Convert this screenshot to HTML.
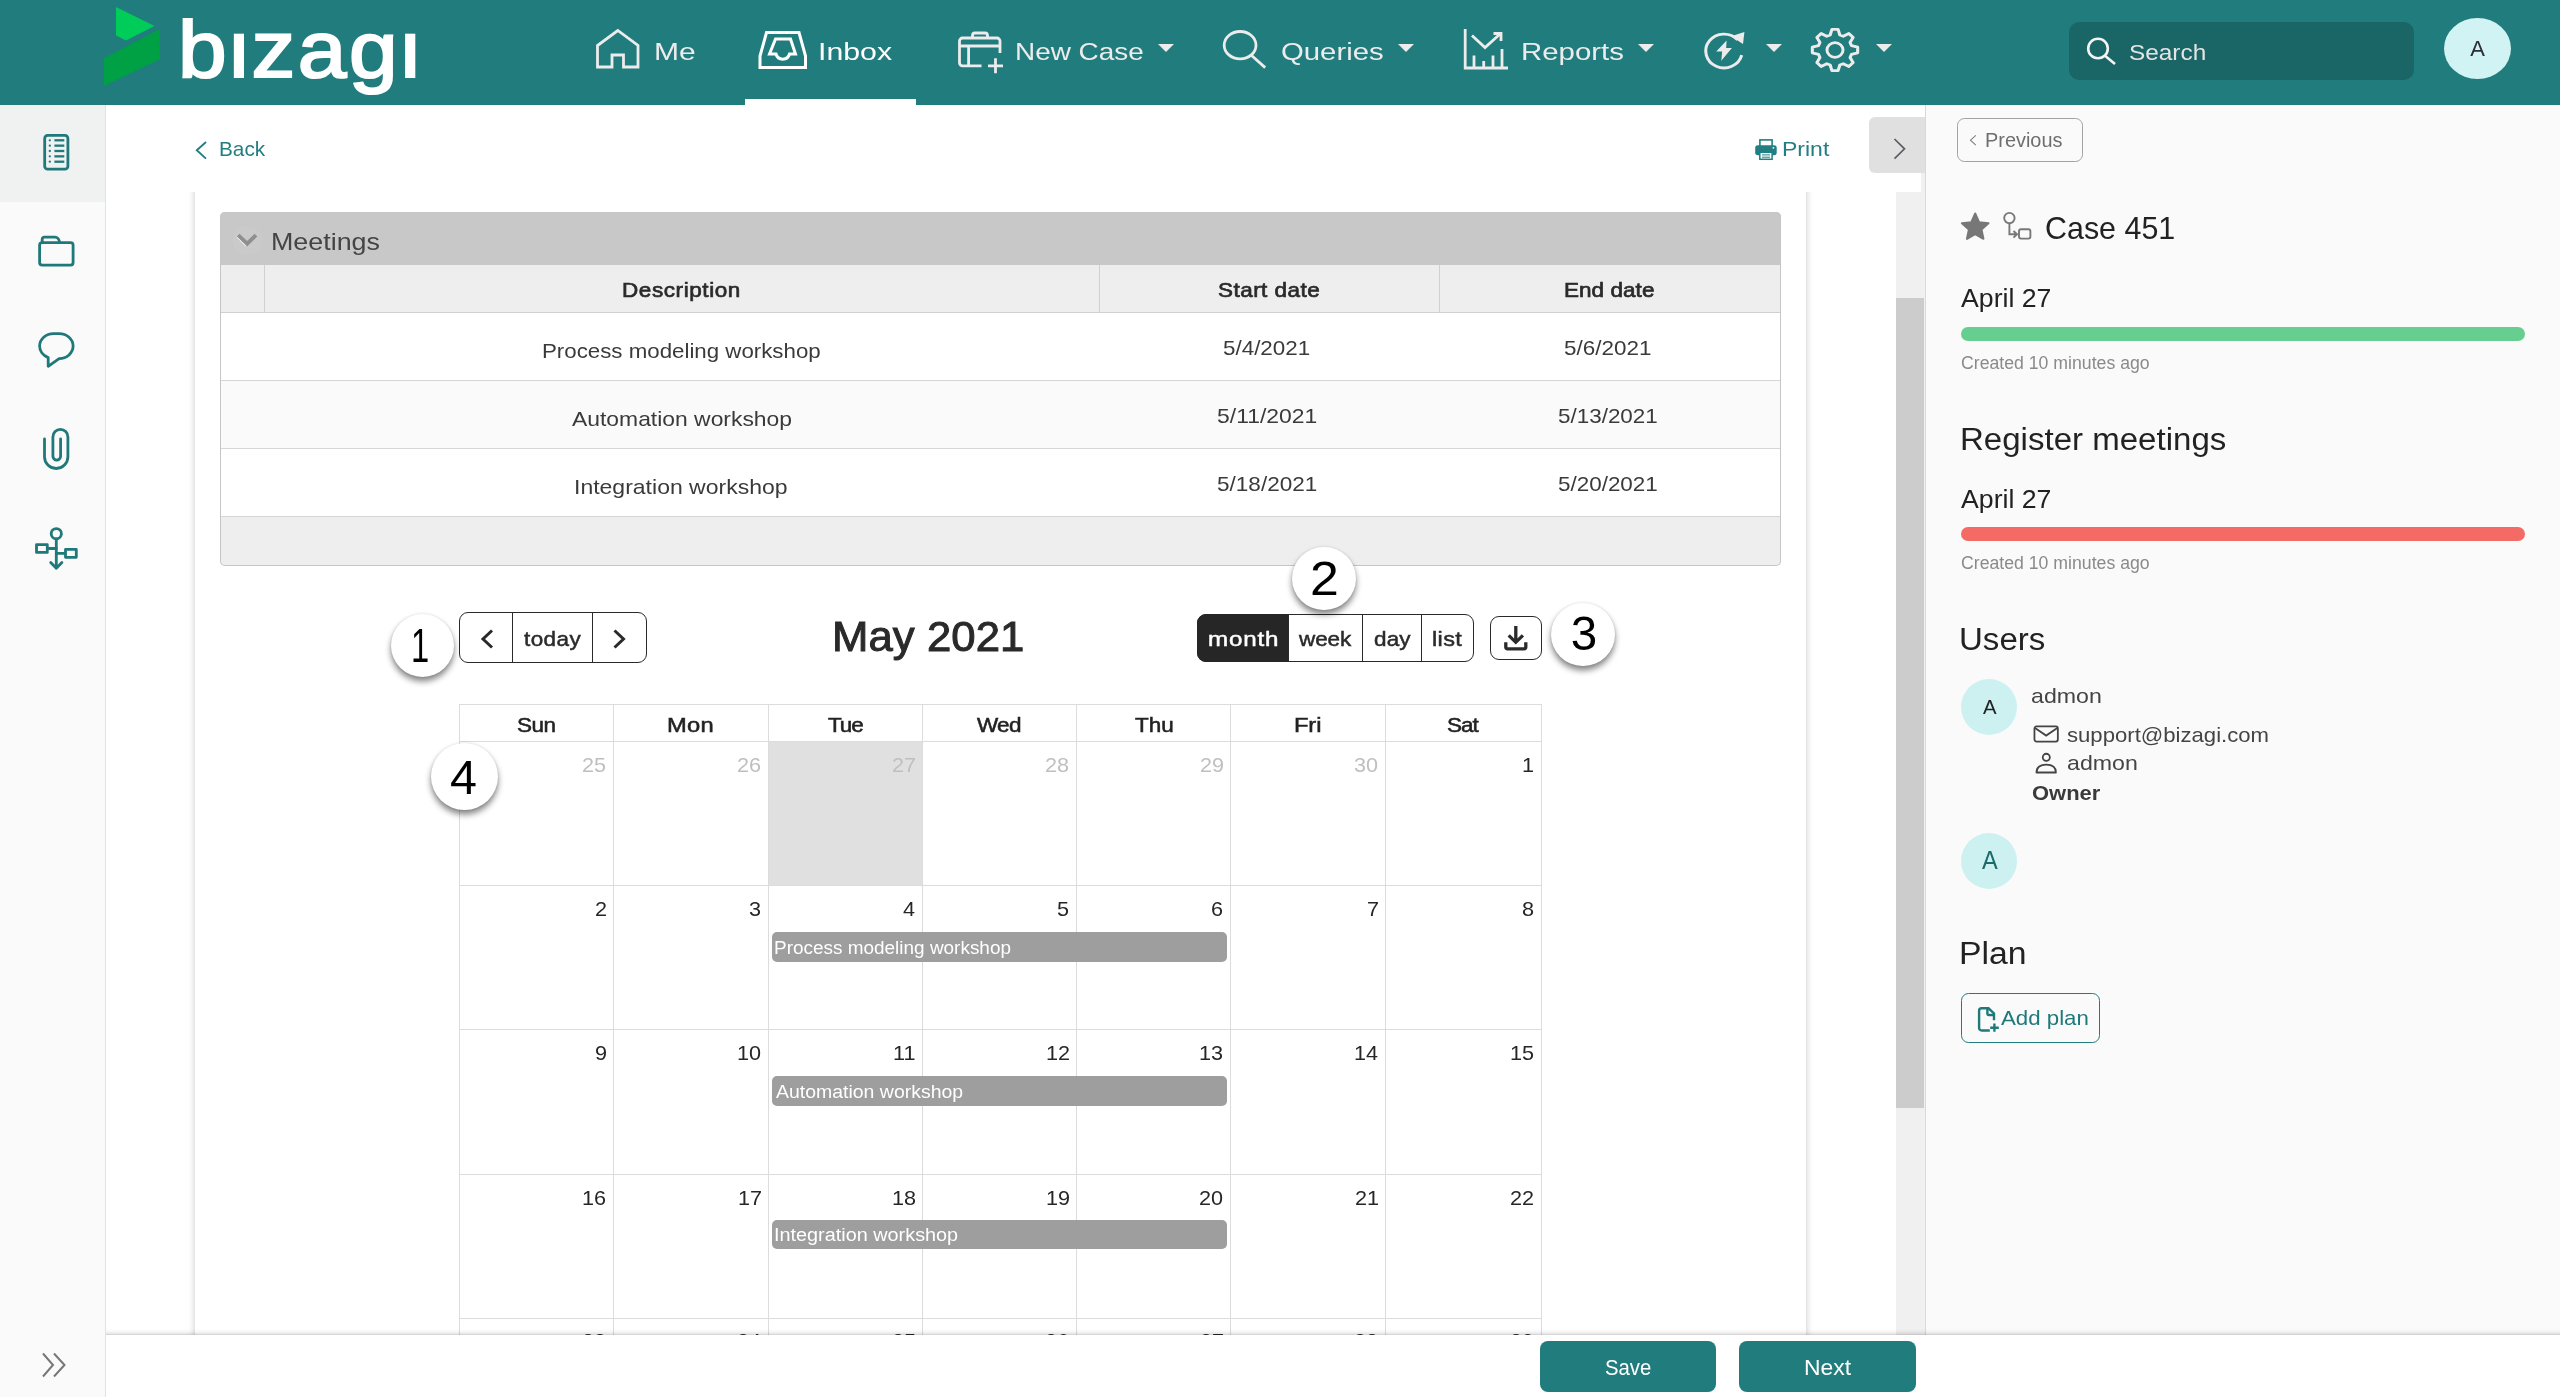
<!DOCTYPE html>
<html lang="en"><head><meta charset="utf-8"><title>Bizagi - Inbox</title>
<style>
*{margin:0;padding:0;box-sizing:border-box}
html,body{width:2560px;height:1397px;overflow:hidden;background:#fff}
body{position:relative;font-family:"Liberation Sans",sans-serif;}
.t{position:absolute;white-space:nowrap;display:block;transform-origin:0 0}
.a{position:absolute;display:block}
svg{position:absolute;overflow:visible}
header,nav,main,aside,footer{display:block;position:static}
#root{position:absolute;left:0;top:0;width:2560px;height:1397px;overflow:hidden;will-change:transform}
</style></head>
<body>
<div id="root">
<header>
<div class="a" style="left:0px;top:0px;width:2560px;height:105px;background:#217c7d"></div>
<svg style="left:100px;top:0px" width="70" height="100" viewBox="0 0 70 100" ><polygon points="16,7 54.5,26 26,40.6 16,35.5" fill="#00cc5a"/><polygon points="59.8,29 59.8,59.2 4,86 4,58.3" fill="#00a045"/></svg>
<span class="t" style="left:177.72px;top:5px;font-size:79.5px;line-height:89px;color:#fff;transform:scaleX(1.1000);letter-spacing:2.423px;-webkit-text-stroke:2.2px #fff;">bizagi</span>
<div class="a" style="left:230px;top:11px;width:18px;height:19.5px;background:#217c7d"></div>
<div class="a" style="left:401px;top:11px;width:18px;height:19.5px;background:#217c7d"></div>
<svg style="left:590px;top:20px" width="60" height="60" viewBox="0 0 60 60" ><path d="M7.5 47 V25.5 L27.8 10.5 L48 25.5 V47 H33.5 V35 H22 V47 Z" fill="none" stroke="#ececec" stroke-width="2.8" stroke-linejoin="miter"/></svg>
<span class="t" style="left:654.10px;top:38px;font-size:24.8px;line-height:27px;color:#ececec;transform:scaleX(1.2113);">Me</span>
<svg style="left:750px;top:20px" width="70" height="60" viewBox="0 0 70 60" ><path d="M16.5 12.5 H49 L55.5 36 V47.5 H10 V36 Z" fill="none" stroke="#fff" stroke-width="3" stroke-linejoin="miter"/><path d="M25.5 19 H40.5 L45.5 34 H39.5 A7 7 0 0 1 26 34 H19.5 Z" fill="none" stroke="#fff" stroke-width="3" stroke-linejoin="miter"/></svg>
<span class="t" style="left:818.28px;top:38px;font-size:24.8px;line-height:27px;color:#fff;transform:scaleX(1.2209);">Inbox</span>
<div class="a" style="left:745px;top:99px;width:171px;height:6px;background:#fff"></div>
<svg style="left:950px;top:25px" width="60" height="55" viewBox="0 0 60 55" ><path d="M31.5 40.8 H12.5 A3 3 0 0 1 9.5 37.8 V16 A3 3 0 0 1 12.5 13 H47 A3 3 0 0 1 50 16 V28" fill="none" stroke="#ececec" stroke-width="2.8" stroke-linejoin="miter"/><path d="M22.5 12.5 V10.5 A2.5 2.5 0 0 1 25 8 H35 A2.5 2.5 0 0 1 37.500 10.5 V12.5" fill="none" stroke="#ececec" stroke-width="2.8" stroke-linejoin="miter"/><path d="M9.5 21 H50 M18.6 21 V40.800" fill="none" stroke="#ececec" stroke-width="2.8" stroke-linejoin="miter"/><path d="M38 40.800 H53 M45.5 33.300 V48.3" fill="none" stroke="#ececec" stroke-width="2.8" stroke-linejoin="miter"/></svg>
<span class="t" style="left:1015.27px;top:38px;font-size:24.8px;line-height:27px;color:#ececec;transform:scaleX(1.1256);">New Case</span>
<svg style="left:1157.7px;top:44px" width="16" height="8" viewBox="0 0 16 8" ><polygon points="0,0 16,0 8,8" fill="#ececec"/></svg>
<svg style="left:1215px;top:22px" width="60" height="55" viewBox="0 0 60 55" ><ellipse cx="25.100" cy="23.200" rx="15.900" ry="13.700" fill="none" stroke="#ececec" stroke-width="2.8" stroke-linejoin="miter"/><path d="M36.300 33.300 L50.200 45.600" fill="none" stroke="#ececec" stroke-width="2.8" stroke-linejoin="miter"/></svg>
<span class="t" style="left:1281.18px;top:38px;font-size:24.8px;line-height:27px;color:#ececec;transform:scaleX(1.1826);">Queries</span>
<svg style="left:1398px;top:44px" width="16" height="8" viewBox="0 0 16 8" ><polygon points="0,0 16,0 8,8" fill="#ececec"/></svg>
<svg style="left:1455px;top:22px" width="60" height="55" viewBox="0 0 60 55" ><path d="M10.2 7 V46 H53" fill="none" stroke="#ececec" stroke-width="2.8" stroke-linejoin="miter"/><path d="M19 46 V33.500 M28.700 46 V39 M38 46 V33.500 M47 46 V27" fill="none" stroke="#ececec" stroke-width="2.8" stroke-linejoin="miter"/><path d="M17 13.500 L30 25.500 L44.5 12.500" fill="none" stroke="#ececec" stroke-width="2.8" stroke-linejoin="miter"/><path d="M38.500 11.500 H46 V19" fill="none" stroke="#ececec" stroke-width="2.8" stroke-linejoin="miter"/></svg>
<span class="t" style="left:1520.65px;top:38px;font-size:24.8px;line-height:27px;color:#ececec;transform:scaleX(1.1853);">Reports</span>
<svg style="left:1638.3px;top:44px" width="16" height="8" viewBox="0 0 16 8" ><polygon points="0,0 16,0 8,8" fill="#ececec"/></svg>
<svg style="left:1723.5px;top:50.5px" width="1" height="1" viewBox="0 0 1 1" ><g transform="scale(1.08,1)"><path d="M16.40 4.09 A16.900 16.900 0 1 1 12.56 -11.31" fill="none" stroke="#ececec" stroke-width="2.8" stroke-linejoin="miter"/><polygon points="18.900,-19 17.600,-7 6.500,-14.800" fill="#ececec"/><path d="M2.400 -10.500 L-7.200 0.400 H-1.700 L-2.500 9.700 L7.300 -3 H2 Z" fill="#ececec"/></g></svg>
<svg style="left:1765.7px;top:44px" width="16" height="8" viewBox="0 0 16 8" ><polygon points="0,0 16,0 8,8" fill="#ececec"/></svg>
<svg style="left:1835.4px;top:50.4px" width="1" height="1" viewBox="0 0 1 1" ><g transform="scale(1.1,1)"><path d="M-2.8 -20.6 L2.8 -20.6 L4.4 -15.0 L7.5 -13.7 L12.6 -16.5 L16.5 -12.6 L13.7 -7.5 L15.0 -4.4 L20.6 -2.8 L20.6 2.8 L15.0 4.4 L13.7 7.5 L16.5 12.6 L12.6 16.5 L7.5 13.7 L4.4 15.0 L2.8 20.6 L-2.8 20.6 L-4.4 15.0 L-7.5 13.7 L-12.6 16.5 L-16.5 12.6 L-13.7 7.5 L-15.0 4.4 L-20.6 2.8 L-20.6 -2.8 L-15.0 -4.4 L-13.7 -7.5 L-16.5 -12.6 L-12.6 -16.5 L-7.5 -13.7 L-4.4 -15.0 Z" fill="none" stroke="#ececec" stroke-width="2.800" stroke-linejoin="round"/><circle cx="0" cy="0" r="7.300" fill="none" stroke="#ececec" stroke-width="2.700"/></g></svg>
<svg style="left:1875.6px;top:44px" width="16" height="8" viewBox="0 0 16 8" ><polygon points="0,0 16,0 8,8" fill="#ececec"/></svg>
<div class="a" style="left:2069px;top:22px;width:345px;height:57.5px;background:#1a6667;border-radius:10px"></div>
<svg style="left:2080px;top:30px" width="45" height="45" viewBox="0 0 45 45" ><circle cx="18" cy="18.500" r="9.8" fill="none" stroke="#f4f4f4" stroke-width="2.6"/><path d="M25 25.800 L35 34" stroke="#f4f4f4" stroke-width="2.6" fill="none"/></svg>
<span class="t" style="left:2129.40px;top:39px;font-size:22.9px;line-height:26px;color:#e4e4e4;transform:scaleX(1.0649);">Search</span>
<div class="a" style="left:2444px;top:18px;width:67px;height:61px;background:#d2f3f3;border-radius:50%"></div>
<span class="t" style="left:2470.16px;top:36px;font-size:22px;line-height:25px;color:#2b2b3b;">A</span>
</header>
<nav>
<div class="a" style="left:0px;top:105px;width:105px;height:1292px;background:#fafafa"></div>
<div class="a" style="left:0px;top:105px;width:105px;height:97px;background:#f0f2f2"></div>
<div class="a" style="left:105px;top:105px;width:1px;height:1292px;background:#e2e2e2"></div>
<svg style="left:36px;top:125px" width="45" height="55" viewBox="0 0 45 55" ><rect x="8.700" y="10.400" width="23.200" height="33.800" rx="3" fill="none" stroke="#1f7879" stroke-width="2.8" stroke-linejoin="round" stroke-linecap="round"/><circle cx="13.800" cy="15.30" r="1.150" fill="#1f7879"/><path d="M18.400 15.30 H28.300" stroke="#1f7879" stroke-width="2.300" fill="none"/><circle cx="13.800" cy="20.65" r="1.150" fill="#1f7879"/><path d="M18.400 20.65 H28.300" stroke="#1f7879" stroke-width="2.300" fill="none"/><circle cx="13.800" cy="26.00" r="1.150" fill="#1f7879"/><path d="M18.400 26.00 H28.300" stroke="#1f7879" stroke-width="2.300" fill="none"/><circle cx="13.800" cy="31.35" r="1.150" fill="#1f7879"/><path d="M18.400 31.35 H28.300" stroke="#1f7879" stroke-width="2.300" fill="none"/><circle cx="13.800" cy="36.70" r="1.150" fill="#1f7879"/><path d="M18.400 36.70 H28.300" stroke="#1f7879" stroke-width="2.300" fill="none"/></svg>
<svg style="left:30px;top:228px" width="55" height="45" viewBox="0 0 55 45" ><path d="M12.200 14.700 V11.200 A2 2 0 0 1 14.200 9.200 H25 Q28.600 9.200 29.900 14.700" fill="none" stroke="#1f7879" stroke-width="2.8" stroke-linejoin="round" stroke-linecap="round"/><rect x="9.600" y="14.700" width="33.500" height="22.400" rx="2.500" fill="none" stroke="#1f7879" stroke-width="2.8" stroke-linejoin="round" stroke-linecap="round"/></svg>
<svg style="left:30px;top:325px" width="55" height="50" viewBox="0 0 55 50" ><path d="M18.200 32.600 A14 12.500 0 0 1 9.600 21.100 A14 12.500 0 0 1 23.600 8.600 H29.100 A14 12.500 0 0 1 43.100 21.100 A14 12.500 0 0 1 29.100 33.600 L18.200 41.300 Z" fill="none" stroke="#1f7879" stroke-width="2.8" stroke-linejoin="round" stroke-linecap="round" stroke-linejoin="miter"/></svg>
<svg style="left:35px;top:420px" width="45" height="58" viewBox="0 0 45 58" ><path d="M25.600 19 V36.300 A3.850 3.850 0 0 1 17.900 36.300 V16.900 A7.500 7.500 0 0 1 32.900 16.900 V36.800 A11.700 11.700 0 0 1 9.500 36.800 V19" fill="none" stroke="#1f7879" stroke-width="2.8" stroke-linejoin="round" stroke-linecap="round"/></svg>
<svg style="left:28px;top:520px" width="60" height="58" viewBox="0 0 60 58" ><circle cx="28.300" cy="13.700" r="5.100" fill="none" stroke="#1f7879" stroke-width="2.8" stroke-linejoin="round" stroke-linecap="round"/><path d="M28.300 18.800 V47.500 M22.700 42.500 L28.300 48.200 L33.900 42.500" fill="none" stroke="#1f7879" stroke-width="2.8" stroke-linejoin="round" stroke-linecap="round"/><rect x="8.500" y="24.700" width="10.800" height="7.700" fill="none" stroke="#1f7879" stroke-width="2.8" stroke-linejoin="round" stroke-linecap="round" stroke-linejoin="miter"/><rect x="37.500" y="29.400" width="10.800" height="7.900" fill="none" stroke="#1f7879" stroke-width="2.8" stroke-linejoin="round" stroke-linecap="round" stroke-linejoin="miter"/><path d="M20.600 28.500 H28.300 M28.300 33.300 H36.200" fill="none" stroke="#1f7879" stroke-width="2.8" stroke-linejoin="round" stroke-linecap="round"/></svg>
<svg style="left:38px;top:1348px" width="35" height="35" viewBox="0 0 35 35" ><path d="M5 5.500 L15 17 L5 28.500 M16 5.500 L26.500 17 L16 28.500" fill="none" stroke="#777" stroke-width="2"/></svg>
</nav>
<main>
<svg style="left:190px;top:135px" width="25" height="30" viewBox="0 0 25 30" ><path d="M16 7 L6.800 15.200 L16 23.600" fill="none" stroke="#217f84" stroke-width="1.900"/></svg>
<span class="t" style="left:218.84px;top:137px;font-size:21px;line-height:23px;color:#217f84;transform:scaleX(0.9879);">Back</span>
<svg style="left:1750px;top:135px" width="32" height="30" viewBox="0 0 32 30" ><rect x="9.900" y="4.900" width="12.200" height="7" fill="#fff" stroke="#217f84" stroke-width="1.600"/><rect x="5.200" y="10.200" width="21.500" height="10" rx="2.600" fill="#217f84"/><rect x="9.800" y="17.300" width="12.300" height="7" fill="#fff" stroke="#217f84" stroke-width="1.500"/><path d="M12 19.900 H20 M12 22.200 H20" stroke="#217f84" stroke-width="1"/><circle cx="23.400" cy="12.800" r="0.900" fill="#fff"/></svg>
<span class="t" style="left:1782.16px;top:137px;font-size:21px;line-height:23px;color:#217f84;transform:scaleX(1.0950);">Print</span>
<div class="a" style="left:1869px;top:117px;width:56.5px;height:56px;background:#e0e0e0;border-radius:6px 0 0 6px"></div>
<svg style="left:1885px;top:130px" width="30" height="40" viewBox="0 0 30 40" ><path d="M9.500 9 L19.500 18.800 L9.500 28.600" fill="none" stroke="#5c5c66" stroke-width="1.700"/></svg>
<div class="a" style="left:1921.3px;top:173px;width:4px;height:19px;background:#f0f0f0"></div>
<div class="a" style="left:106px;top:192px;width:1819px;height:1143.500px;overflow:hidden">
<div class="a" style="left:-106px;top:-192px;width:2560px;height:1397px">
<div class="a" style="left:195px;top:170px;width:1610.5px;height:1400px;background:#fff;box-shadow:0 0 7px rgba(0,0,0,.22)"></div>
<div class="a" style="left:1896px;top:192px;width:29px;height:1145px;background:#f0f0f0"></div>
<div class="a" style="left:1896px;top:298px;width:28px;height:810.3px;background:#cccccc"></div>
<div class="a" style="left:220px;top:212px;width:1561px;height:353.5px;background:#eee;border-radius:5px;overflow:hidden"></div>
<div class="a" style="left:220px;top:212px;width:1561px;height:52.5px;background:#c8c8c8;border-radius:5px 5px 0 0"></div>
<div class="a" style="left:232.5px;top:226px;width:29px;height:29px;background:rgba(255,255,255,.045);border-radius:50%"></div>
<svg style="left:235px;top:230px" width="25" height="20" viewBox="0 0 25 20" ><path d="M2.600 6.300 L11.600 15.300" fill="none" stroke="#fff" stroke-width="2.500"/><path d="M3.200 5.200 L12.100 13.700 L21 5.200" fill="none" stroke="#8f8f8f" stroke-width="3.900"/></svg>
<span class="t" style="left:271.15px;top:228px;font-size:24.5px;line-height:27px;color:#444;transform:scaleX(1.0957);">Meetings</span>
<div class="a" style="left:220.5px;top:264.5px;width:1560px;height:48px;background:#eeeeee"></div>
<div class="a" style="left:263.5px;top:264.5px;width:1px;height:48px;background:#d0d0d0"></div>
<div class="a" style="left:1098.5px;top:264.5px;width:1px;height:48px;background:#d0d0d0"></div>
<div class="a" style="left:1438.5px;top:264.5px;width:1px;height:48px;background:#d0d0d0"></div>
<div class="a" style="left:220.5px;top:312px;width:1560px;height:1px;background:#d0d0d0"></div>
<span class="t" style="left:622.35px;top:278px;font-size:21px;line-height:23px;color:#2a2a2a;transform:scaleX(1.0700);letter-spacing:0.552px;-webkit-text-stroke:0.7px #2a2a2a;">Description</span>
<span class="t" style="left:1218.14px;top:278px;font-size:21px;line-height:23px;color:#2a2a2a;transform:scaleX(1.0700);letter-spacing:0.438px;-webkit-text-stroke:0.7px #2a2a2a;">Start date</span>
<span class="t" style="left:1564.15px;top:278px;font-size:21px;line-height:23px;color:#2a2a2a;transform:scaleX(1.0700);letter-spacing:0.057px;-webkit-text-stroke:0.7px #2a2a2a;">End date</span>
<div class="a" style="left:220.5px;top:313px;width:1560px;height:67px;background:#fff"></div>
<div class="a" style="left:220.5px;top:380px;width:1560px;height:1px;background:#d6d6d6"></div>
<div class="a" style="left:220.5px;top:381px;width:1560px;height:67px;background:#fafafa"></div>
<div class="a" style="left:220.5px;top:448px;width:1560px;height:1px;background:#d6d6d6"></div>
<div class="a" style="left:220.5px;top:449px;width:1560px;height:67px;background:#fff"></div>
<div class="a" style="left:220.5px;top:516px;width:1560px;height:1px;background:#d6d6d6"></div>
<span class="t" style="left:541.82px;top:339px;font-size:21px;line-height:23px;color:#3a3a3a;transform:scaleX(1.0612);">Process modeling workshop</span>
<span class="t" style="left:1223.40px;top:336px;font-size:21px;line-height:23px;color:#3a3a3a;transform:scaleX(1.0663);">5/4/2021</span>
<span class="t" style="left:1564.10px;top:336px;font-size:21px;line-height:23px;color:#3a3a3a;transform:scaleX(1.0688);">5/6/2021</span>
<span class="t" style="left:571.70px;top:407px;font-size:21px;line-height:23px;color:#3a3a3a;transform:scaleX(1.0896);">Automation workshop</span>
<span class="t" style="left:1217.08px;top:404px;font-size:21px;line-height:23px;color:#3a3a3a;transform:scaleX(1.0922);">5/11/2021</span>
<span class="t" style="left:1557.80px;top:404px;font-size:21px;line-height:23px;color:#3a3a3a;transform:scaleX(1.0680);">5/13/2021</span>
<span class="t" style="left:573.93px;top:475px;font-size:21px;line-height:23px;color:#3a3a3a;transform:scaleX(1.0955);">Integration workshop</span>
<span class="t" style="left:1217.10px;top:472px;font-size:21px;line-height:23px;color:#3a3a3a;transform:scaleX(1.0735);">5/18/2021</span>
<span class="t" style="left:1557.80px;top:472px;font-size:21px;line-height:23px;color:#3a3a3a;transform:scaleX(1.0680);">5/20/2021</span>
<div class="a" style="left:220px;top:212px;width:1561px;height:353.5px;border:1px solid #c5c6c1;border-top-color:#c8c8c8;border-radius:5px;background:none"></div>
<div class="a" style="left:459px;top:612px;width:188px;height:50.5px;border:1.300px solid #2a2a2a;border-radius:9px"></div>
<div class="a" style="left:512px;top:612px;width:1.3px;height:50.5px;background:#2a2a2a"></div>
<div class="a" style="left:592px;top:612px;width:1.3px;height:50.5px;background:#2a2a2a"></div>
<svg style="left:470px;top:620px" width="35" height="35" viewBox="0 0 35 35" ><path d="M22 10.500 L13 19 L22 27.500" fill="none" stroke="#2a2a2a" stroke-width="3"/></svg>
<svg style="left:602px;top:620px" width="35" height="35" viewBox="0 0 35 35" ><path d="M12.500 10.500 L21.500 19 L12.500 27.500" fill="none" stroke="#2a2a2a" stroke-width="3"/></svg>
<span class="t" style="left:524.31px;top:627px;font-size:21px;line-height:23px;color:#2a2a2a;transform:scaleX(1.0700);letter-spacing:0.397px;-webkit-text-stroke:0.5px #2a2a2a;">today</span>
<span class="t" style="left:831.91px;top:613px;font-size:42px;line-height:47px;color:#2a2a2a;transform:scaleX(1.0400);letter-spacing:0.069px;-webkit-text-stroke:1.0px #2a2a2a;">May 2021</span>
<div class="a" style="left:1197px;top:614px;width:277px;height:48px;border:1.300px solid #2a2a2a;border-radius:9px;overflow:hidden"></div>
<div class="a" style="left:1197px;top:614px;width:91.5px;height:48px;background:#262626;border-radius:9px 0 0 9px"></div>
<div class="a" style="left:1288px;top:614px;width:1.3px;height:48px;background:#2a2a2a"></div>
<div class="a" style="left:1362px;top:614px;width:1.3px;height:48px;background:#2a2a2a"></div>
<div class="a" style="left:1421px;top:614px;width:1.3px;height:48px;background:#2a2a2a"></div>
<span class="t" style="left:1207.88px;top:627px;font-size:21px;line-height:23px;color:#fff;transform:scaleX(1.1500);letter-spacing:0.718px;-webkit-text-stroke:0.5px #fff;">month</span>
<span class="t" style="left:1299.15px;top:627px;font-size:21px;line-height:23px;color:#2a2a2a;transform:scaleX(1.0700);letter-spacing:-0.052px;-webkit-text-stroke:0.5px #2a2a2a;">week</span>
<span class="t" style="left:1373.75px;top:627px;font-size:21px;line-height:23px;color:#2a2a2a;transform:scaleX(1.0700);letter-spacing:0.151px;-webkit-text-stroke:0.5px #2a2a2a;">day</span>
<span class="t" style="left:1432.12px;top:627px;font-size:21px;line-height:23px;color:#2a2a2a;transform:scaleX(1.1200);letter-spacing:0.313px;-webkit-text-stroke:0.5px #2a2a2a;">list</span>
<div class="a" style="left:1490px;top:616px;width:52px;height:44px;border:1.300px solid #2a2a2a;border-radius:9px"></div>
<svg style="left:1498px;top:620px" width="36" height="36" viewBox="0 0 36 36" ><path d="M17.800 6.100 V21.500 M10.700 15.300 L17.800 22.300 L24.900 15.300" fill="none" stroke="#2a2a2a" stroke-width="3.300"/><path d="M7.800 22.300 V27.300 A1.500 1.500 0 0 0 9.300 28.800 H26.300 A1.500 1.500 0 0 0 27.800 27.300 V22.300" fill="none" stroke="#2a2a2a" stroke-width="3.300"/></svg>
<div class="a" style="left:769.4px;top:742.2px;width:153.10000000000002px;height:143.0px;background:#e0e0e0"></div>
<div class="a" style="left:458.9px;top:704.4px;width:1.2px;height:758.6px;background:#dcdcdc"></div>
<div class="a" style="left:612.9px;top:704.4px;width:1.2px;height:758.6px;background:#dcdcdc"></div>
<div class="a" style="left:767.9px;top:704.4px;width:1.2px;height:758.6px;background:#dcdcdc"></div>
<div class="a" style="left:922.0px;top:704.4px;width:1.2px;height:758.6px;background:#dcdcdc"></div>
<div class="a" style="left:1075.9px;top:704.4px;width:1.2px;height:758.6px;background:#dcdcdc"></div>
<div class="a" style="left:1229.9px;top:704.4px;width:1.2px;height:758.6px;background:#dcdcdc"></div>
<div class="a" style="left:1384.9px;top:704.4px;width:1.2px;height:758.6px;background:#dcdcdc"></div>
<div class="a" style="left:1540.5px;top:704.4px;width:1.2px;height:758.6px;background:#dcdcdc"></div>
<div class="a" style="left:459.4px;top:703.9px;width:1081.6px;height:1.2px;background:#dcdcdc"></div>
<div class="a" style="left:459.4px;top:740.7px;width:1081.6px;height:1.2px;background:#dcdcdc"></div>
<div class="a" style="left:459.4px;top:884.7px;width:1081.6px;height:1.2px;background:#dcdcdc"></div>
<div class="a" style="left:459.4px;top:1028.8px;width:1081.6px;height:1.2px;background:#dcdcdc"></div>
<div class="a" style="left:459.4px;top:1173.8px;width:1081.6px;height:1.2px;background:#dcdcdc"></div>
<div class="a" style="left:459.4px;top:1318.0px;width:1081.6px;height:1.2px;background:#dcdcdc"></div>
<div class="a" style="left:459.4px;top:1462.5px;width:1081.6px;height:1.2px;background:#dcdcdc"></div>
<span class="t" style="left:517.06px;top:713px;font-size:21px;line-height:23px;color:#222;transform:scaleX(1.0700);letter-spacing:-0.456px;-webkit-text-stroke:0.55px #222;">Sun</span>
<span class="t" style="left:667.38px;top:713px;font-size:21px;line-height:23px;color:#222;transform:scaleX(1.1300);letter-spacing:0.237px;-webkit-text-stroke:0.55px #222;">Mon</span>
<span class="t" style="left:827.53px;top:713px;font-size:21px;line-height:23px;color:#222;transform:scaleX(1.0700);letter-spacing:-1.052px;-webkit-text-stroke:0.55px #222;">Tue</span>
<span class="t" style="left:977.46px;top:713px;font-size:21px;line-height:23px;color:#222;transform:scaleX(1.0700);letter-spacing:-0.656px;-webkit-text-stroke:0.55px #222;">Wed</span>
<span class="t" style="left:1134.63px;top:713px;font-size:21px;line-height:23px;color:#222;transform:scaleX(1.0700);letter-spacing:0.005px;-webkit-text-stroke:0.55px #222;">Thu</span>
<span class="t" style="left:1294.18px;top:713px;font-size:21px;line-height:23px;color:#222;transform:scaleX(1.1300);letter-spacing:-0.113px;-webkit-text-stroke:0.55px #222;">Fri</span>
<span class="t" style="left:1446.56px;top:713px;font-size:21px;line-height:23px;color:#222;transform:scaleX(1.0700);letter-spacing:-0.903px;-webkit-text-stroke:0.55px #222;">Sat</span>
<span class="t" style="left:582.46px;top:753px;font-size:21px;line-height:23px;color:#bfbfbf;transform:scaleX(1.0300);">25</span>
<span class="t" style="left:737.46px;top:753px;font-size:21px;line-height:23px;color:#bfbfbf;transform:scaleX(1.0300);">26</span>
<span class="t" style="left:891.77px;top:753px;font-size:21px;line-height:23px;color:#bfbfbf;transform:scaleX(1.0300);">27</span>
<span class="t" style="left:1045.46px;top:753px;font-size:21px;line-height:23px;color:#bfbfbf;transform:scaleX(1.0300);">28</span>
<span class="t" style="left:1199.56px;top:753px;font-size:21px;line-height:23px;color:#bfbfbf;transform:scaleX(1.0300);">29</span>
<span class="t" style="left:1354.35px;top:753px;font-size:21px;line-height:23px;color:#bfbfbf;transform:scaleX(1.0300);">30</span>
<span class="t" style="left:1522.17px;top:753px;font-size:21px;line-height:23px;color:#262626;transform:scaleX(1.0300);">1</span>
<span class="t" style="left:594.68px;top:897px;font-size:21px;line-height:23px;color:#262626;transform:scaleX(1.0300);">2</span>
<span class="t" style="left:749.46px;top:897px;font-size:21px;line-height:23px;color:#262626;transform:scaleX(1.0300);">3</span>
<span class="t" style="left:903.34px;top:897px;font-size:21px;line-height:23px;color:#262626;transform:scaleX(1.0300);">4</span>
<span class="t" style="left:1057.46px;top:897px;font-size:21px;line-height:23px;color:#262626;transform:scaleX(1.0300);">5</span>
<span class="t" style="left:1211.46px;top:897px;font-size:21px;line-height:23px;color:#262626;transform:scaleX(1.0300);">6</span>
<span class="t" style="left:1366.68px;top:897px;font-size:21px;line-height:23px;color:#262626;transform:scaleX(1.0300);">7</span>
<span class="t" style="left:1522.06px;top:897px;font-size:21px;line-height:23px;color:#262626;transform:scaleX(1.0300);">8</span>
<span class="t" style="left:594.57px;top:1041px;font-size:21px;line-height:23px;color:#262626;transform:scaleX(1.0300);">9</span>
<span class="t" style="left:737.35px;top:1041px;font-size:21px;line-height:23px;color:#262626;transform:scaleX(1.0300);">10</span>
<span class="t" style="left:893.29px;top:1041px;font-size:21px;line-height:23px;color:#262626;transform:scaleX(1.0300);">11</span>
<span class="t" style="left:1045.67px;top:1041px;font-size:21px;line-height:23px;color:#262626;transform:scaleX(1.0300);">12</span>
<span class="t" style="left:1199.46px;top:1041px;font-size:21px;line-height:23px;color:#262626;transform:scaleX(1.0300);">13</span>
<span class="t" style="left:1354.24px;top:1041px;font-size:21px;line-height:23px;color:#262626;transform:scaleX(1.0300);">14</span>
<span class="t" style="left:1510.06px;top:1041px;font-size:21px;line-height:23px;color:#262626;transform:scaleX(1.0300);">15</span>
<span class="t" style="left:582.46px;top:1186px;font-size:21px;line-height:23px;color:#262626;transform:scaleX(1.0300);">16</span>
<span class="t" style="left:737.67px;top:1186px;font-size:21px;line-height:23px;color:#262626;transform:scaleX(1.0300);">17</span>
<span class="t" style="left:891.56px;top:1186px;font-size:21px;line-height:23px;color:#262626;transform:scaleX(1.0300);">18</span>
<span class="t" style="left:1045.56px;top:1186px;font-size:21px;line-height:23px;color:#262626;transform:scaleX(1.0300);">19</span>
<span class="t" style="left:1199.35px;top:1186px;font-size:21px;line-height:23px;color:#262626;transform:scaleX(1.0300);">20</span>
<span class="t" style="left:1354.56px;top:1186px;font-size:21px;line-height:23px;color:#262626;transform:scaleX(1.0300);">21</span>
<span class="t" style="left:1510.27px;top:1186px;font-size:21px;line-height:23px;color:#262626;transform:scaleX(1.0300);">22</span>
<span class="t" style="left:582.46px;top:1329px;font-size:21px;line-height:23px;color:#262626;transform:scaleX(1.0300);">23</span>
<span class="t" style="left:737.24px;top:1329px;font-size:21px;line-height:23px;color:#262626;transform:scaleX(1.0300);">24</span>
<span class="t" style="left:891.56px;top:1329px;font-size:21px;line-height:23px;color:#262626;transform:scaleX(1.0300);">25</span>
<span class="t" style="left:1045.46px;top:1329px;font-size:21px;line-height:23px;color:#262626;transform:scaleX(1.0300);">26</span>
<span class="t" style="left:1199.67px;top:1329px;font-size:21px;line-height:23px;color:#262626;transform:scaleX(1.0300);">27</span>
<span class="t" style="left:1354.46px;top:1329px;font-size:21px;line-height:23px;color:#262626;transform:scaleX(1.0300);">28</span>
<span class="t" style="left:1510.16px;top:1329px;font-size:21px;line-height:23px;color:#262626;transform:scaleX(1.0300);">29</span>
<div class="a" style="left:772px;top:932.2px;width:455px;height:29.7px;background:#9e9e9e;border-radius:5px"></div>
<span class="t" style="left:773.98px;top:938px;font-size:18px;line-height:20px;color:#fff;transform:scaleX(1.0528);">Process modeling workshop</span>
<div class="a" style="left:772px;top:1076.3px;width:455px;height:29.7px;background:#9e9e9e;border-radius:5px"></div>
<span class="t" style="left:775.50px;top:1082px;font-size:18px;line-height:20px;color:#fff;transform:scaleX(1.0809);">Automation workshop</span>
<div class="a" style="left:772px;top:1219.8px;width:455px;height:29.7px;background:#9e9e9e;border-radius:5px"></div>
<span class="t" style="left:773.71px;top:1225px;font-size:18px;line-height:20px;color:#fff;transform:scaleX(1.1020);">Integration workshop</span>
<div class="a" style="left:390.59999999999997px;top:613.5px;width:63.6px;height:63.6px;background:#fff;border-radius:50%;box-shadow:0 4.500px 6px rgba(0,0,0,.48),0 0 3px rgba(0,0,0,.10)"></div>
<span class="t" style="left:411.05px;top:619px;font-size:47.5px;line-height:53px;color:#000;transform:scaleX(0.6872);">1</span>
<div class="a" style="left:1292.4px;top:546.8000000000001px;width:63.6px;height:63.6px;background:#fff;border-radius:50%;box-shadow:0 4.500px 6px rgba(0,0,0,.48),0 0 3px rgba(0,0,0,.10)"></div>
<span class="t" style="left:1309.91px;top:552px;font-size:47.5px;line-height:53px;color:#000;transform:scaleX(1.0920);">2</span>
<div class="a" style="left:1551.4px;top:602.9000000000001px;width:63.6px;height:63.6px;background:#fff;border-radius:50%;box-shadow:0 4.500px 6px rgba(0,0,0,.48),0 0 3px rgba(0,0,0,.10)"></div>
<span class="t" style="left:1570.70px;top:607px;font-size:47.5px;line-height:53px;color:#000;">3</span>
<div class="a" style="left:430.8px;top:742.7px;width:67px;height:67px;background:#fff;border-radius:50%;box-shadow:0 4.500px 6px rgba(0,0,0,.48),0 0 3px rgba(0,0,0,.10)"></div>
<span class="t" style="left:450.23px;top:750px;font-size:49px;line-height:54px;color:#000;transform:scaleX(0.9901);">4</span>
</div></div>
</main>
<aside>
<div class="a" style="left:1925px;top:105px;width:635px;height:1292px;background:#fafafa;border-left:1px solid #d9d9d9"></div>
<div class="a" style="left:1957px;top:118px;width:125.7px;height:43.8px;border:1px solid #a2a2a2;border-radius:7.500px;background:#fafafa"></div>
<svg style="left:1965px;top:130px" width="15" height="20" viewBox="0 0 15 20" ><path d="M10.800 5.300 L5.500 10.200 L10.800 15.100" fill="none" stroke="#808080" stroke-width="1.100"/></svg>
<span class="t" style="left:1985.21px;top:129px;font-size:19.4px;line-height:22px;color:#6e6e6e;transform:scaleX(1.0268);">Previous</span>
<svg style="left:1955px;top:205px" width="40" height="40" viewBox="0 0 40 40" ><polygon points="20.20,8.50 24.08,17.16 33.51,18.17 26.48,24.54 28.43,33.83 20.20,29.10 11.97,33.83 13.92,24.54 6.89,18.17 16.32,17.16" fill="#777" stroke="#777" stroke-width="2" stroke-linejoin="round"/></svg>
<svg style="left:1998px;top:205px" width="40" height="40" viewBox="0 0 40 40" ><circle cx="11.400" cy="13.100" r="5.200" fill="none" stroke="#787878" stroke-width="1.900"/><path d="M11.400 18.500 V29.300 H18.500 M15.500 26 L19 29.300 L15.500 32.600" fill="none" stroke="#787878" stroke-width="1.900"/><rect x="21" y="24.200" width="11.400" height="9.400" rx="2" fill="none" stroke="#787878" stroke-width="1.900"/></svg>
<span class="t" style="left:2045.08px;top:210px;font-size:31.5px;line-height:36px;color:#222;transform:scaleX(0.9657);">Case 451</span>
<span class="t" style="left:1961.30px;top:284px;font-size:25.5px;line-height:28px;color:#222;transform:scaleX(1.0461);">April 27</span>
<div class="a" style="left:1961px;top:326.9px;width:564.3px;height:14.3px;background:#66cf8f;border-radius:8px"></div>
<span class="t" style="left:1960.72px;top:353px;font-size:17.5px;line-height:20px;color:#8a8a8a;transform:scaleX(1.0100);">Created 10 minutes ago</span>
<span class="t" style="left:1960.26px;top:422px;font-size:31px;line-height:35px;color:#222;transform:scaleX(1.0658);">Register meetings</span>
<span class="t" style="left:1961.30px;top:485px;font-size:25.5px;line-height:28px;color:#222;transform:scaleX(1.0461);">April 27</span>
<div class="a" style="left:1961px;top:527px;width:564.3px;height:14.2px;background:#f46a64;border-radius:8px"></div>
<span class="t" style="left:1960.72px;top:553px;font-size:17.5px;line-height:20px;color:#8a8a8a;transform:scaleX(1.0100);">Created 10 minutes ago</span>
<span class="t" style="left:1959.12px;top:622px;font-size:31px;line-height:35px;color:#222;transform:scaleX(1.0658);">Users</span>
<div class="a" style="left:1961px;top:679px;width:56px;height:56px;background:#cdf1f1;border-radius:50%"></div>
<span class="t" style="left:1982.60px;top:695px;font-size:20.5px;line-height:23px;color:#222;transform:scaleX(0.9903);">A</span>
<span class="t" style="left:2031.37px;top:684px;font-size:21px;line-height:23px;color:#444;transform:scaleX(1.1025);">admon</span>
<svg style="left:2030px;top:722px" width="32" height="24" viewBox="0 0 32 24" ><rect x="4.450" y="4.450" width="23.400" height="15.100" rx="2" fill="none" stroke="#444" stroke-width="1.800"/><path d="M5 6 L16.150 13.600 L27.300 6" fill="none" stroke="#444" stroke-width="1.800"/></svg>
<span class="t" style="left:2067.04px;top:723px;font-size:21px;line-height:23px;color:#444;transform:scaleX(1.0535);">support@bizagi.com</span>
<svg style="left:2030px;top:750px" width="32" height="28" viewBox="0 0 32 28" ><circle cx="16.300" cy="7.300" r="3.550" fill="none" stroke="#444" stroke-width="1.800"/><path d="M6.500 22.500 C6.500 17 10.500 14.700 16.200 14.700 C21.900 14.700 25.900 17 25.900 22.500 Z" fill="none" stroke="#444" stroke-width="1.800" stroke-linejoin="round"/></svg>
<span class="t" style="left:2066.77px;top:751px;font-size:21px;line-height:23px;color:#444;transform:scaleX(1.1025);">admon</span>
<span class="t" style="left:2031.72px;top:781px;font-size:21px;line-height:23px;color:#3a3a3a;transform:scaleX(1.0458);font-weight:700;">Owner</span>
<div class="a" style="left:1961px;top:833px;width:56px;height:56px;background:#cdf1f1;border-radius:50%"></div>
<span class="t" style="left:1981.60px;top:846px;font-size:25px;line-height:28px;color:#1c6b6c;transform:scaleX(0.9444);">A</span>
<span class="t" style="left:1958.90px;top:936px;font-size:31px;line-height:35px;color:#222;transform:scaleX(1.0886);">Plan</span>
<div class="a" style="left:1961px;top:992.8px;width:139px;height:50px;border:1.200px solid #217c7d;border-radius:7.500px;background:#fafafa"></div>
<svg style="left:1972px;top:1002px" width="32" height="36" viewBox="0 0 32 36" ><path d="M17.800 28.500 H9.600 A2.500 2.500 0 0 1 7.100 26 V8.800 A2.500 2.500 0 0 1 9.600 6.300 H16.500 L22 11.500 V18.300" fill="none" stroke="#1f797a" stroke-width="2.400"/><path d="M15.400 6.800 V11.500 A1.500 1.500 0 0 0 16.900 13 H22" fill="none" stroke="#1f797a" stroke-width="2.400"/><path d="M18.200 25.700 H26.800 M22.400 21.500 V29.800" fill="none" stroke="#1f797a" stroke-width="2.400" stroke-width="2"/></svg>
<span class="t" style="left:2001.00px;top:1006px;font-size:21px;line-height:23px;color:#1f797a;transform:scaleX(1.0592);">Add plan</span>
</aside>
<footer>
<div class="a" style="left:106px;top:1328.5px;width:2454px;height:6.5px;background:linear-gradient(to bottom,rgba(0,0,0,0) 0%,rgba(0,0,0,.035) 45%,rgba(0,0,0,.09) 75%,rgba(0,0,0,.19) 100%)"></div>
<div class="a" style="left:106px;top:1334.8px;width:2454px;height:63px;background:#fff"></div>
<div class="a" style="left:1540px;top:1341px;width:176px;height:51px;background:#217c7d;border-radius:8px"></div>
<span class="t" style="left:1604.59px;top:1356px;font-size:21.5px;line-height:24px;color:#fff;transform:scaleX(0.9451);">Save</span>
<div class="a" style="left:1739px;top:1341px;width:177px;height:51px;background:#217c7d;border-radius:8px"></div>
<span class="t" style="left:1803.57px;top:1356px;font-size:21.5px;line-height:24px;color:#fff;transform:scaleX(1.0648);">Next</span>
</footer>
</div>
</body></html>
